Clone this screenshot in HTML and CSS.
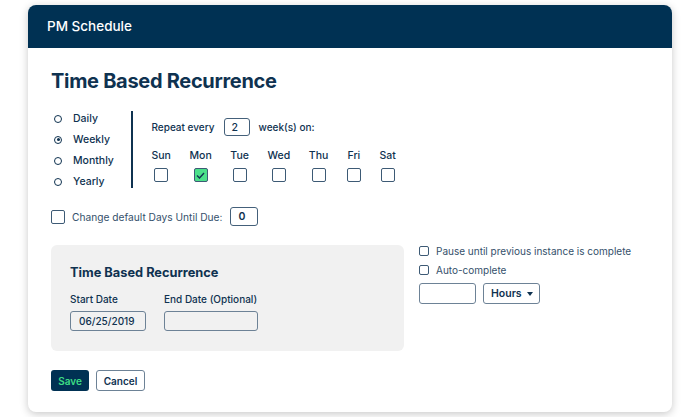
FILE: index.html
```html
<!DOCTYPE html>
<html lang="en">
<head>
    <meta charset="UTF-8">
    <title>PM Schedule</title>
    <link rel="stylesheet" href="styles.css">
</head>
<body>
    <div class="card">
        <div class="card-header">PM Schedule</div>

        <div class="card-body">
            <h1 class="title">Time Based Recurrence</h1>

            <div class="recurrence">
                <ul class="freq-list">
                    <li><span class="radio"></span>Daily</li>
                    <li><span class="radio checked"></span>Weekly</li>
                    <li><span class="radio"></span>Monthly</li>
                    <li><span class="radio"></span>Yearly</li>
                </ul>
                <div class="divider"></div>

                <div class="weekly">
                    <div class="repeat-row">
                        <span>Repeat every</span>
                        <span class="num-box">2</span>
                        <span>week(s) on:</span>
                    </div>
                    <div class="days">
                        <div class="day"><span>Sun</span><span class="check"></span></div>
                        <div class="day"><span>Mon</span><span class="check on">
                            <svg width="9" height="7" viewBox="0 0 9 7"><path d="M1 3.5 L3.5 6 L8 1" fill="none" stroke="#0f3250" stroke-width="1.4"/></svg>
                        </span></div>
                        <div class="day"><span>Tue</span><span class="check"></span></div>
                        <div class="day"><span>Wed</span><span class="check"></span></div>
                        <div class="day"><span>Thu</span><span class="check"></span></div>
                        <div class="day"><span>Fri</span><span class="check"></span></div>
                        <div class="day"><span>Sat</span><span class="check"></span></div>
                    </div>
                </div>
            </div>

            <div class="due-row">
                <span class="check"></span>
                <span>Change default Days Until Due:</span>
                <span class="num-box due">0</span>
            </div>

            <div class="bottom">
                <div class="range-box">
                    <h2>Time Based Recurrence</h2>
                    <div class="dates">
                        <div class="field">
                            <label>Start Date</label>
                            <span class="date-input start">06/25/2019</span>
                        </div>
                        <div class="field">
                            <label>End Date (Optional)</label>
                            <span class="date-input end"></span>
                        </div>
                    </div>
                </div>

                <div class="options">
                    <div class="opt"><span class="small-check"></span>Pause until previous instance is complete</div>
                    <div class="opt"><span class="small-check"></span>Auto-complete</div>
                    <div class="auto-row">
                        <span class="hours-input"></span>
                        <span class="select">Hours <span class="caret"></span></span>
                    </div>
                </div>
            </div>

            <div class="actions">
                <button class="btn-save">Save</button>
                <button class="btn-cancel">Cancel</button>
            </div>
        </div>
    </div>
</body>
</html>
```

FILE: styles.css
```css
body {
    margin: 0;
    padding: 5px 28px;
    background: #fff;
    font-family: 'Inter', 'Noto Sans', sans-serif;
    color: #0f3250;
}

.card {
    width: 644px;
    height: 407px;
    border-radius: 8px;
    background: #fff;
    box-shadow: 0 2px 8px rgba(0,0,0,0.22);
    overflow: hidden;
}

.card-header {
    height: 43px;
    line-height: 43px;
    padding-left: 19px;
    background: #003153;
    color: #fff;
    font-size: 13.5px;
    font-weight: 500;
}

.card-body {
    padding: 0 23px;
}

.title {
    margin: 20px 0 0;
    font-size: 20px;
    line-height: 26px;
    font-weight: 700;
    letter-spacing: -0.3px;
}

/* recurrence */
.recurrence {
    display: flex;
    align-items: flex-start;
    margin-top: 17px;
}

.freq-list {
    list-style: none;
    margin: -3px 0 0;
    padding: 0 0 0 3px;
    width: 77px;
}

    .freq-list li {
        display: flex;
        align-items: center;
        height: 21px;
        font-size: 10.5px;
        font-weight: 500;
    }

.divider {
    width: 1.5px;
    height: 77px;
    background: #0f3250;
}

.radio {
    width: 6px;
    height: 6px;
    border: 1.5px solid #0f3250;
    border-radius: 50%;
    margin-right: 11px;
    position: relative;
}

    .radio.checked::after {
        content: '';
        position: absolute;
        left: 1.5px;
        top: 1.5px;
        width: 3px;
        height: 3px;
        border-radius: 50%;
        background: #0f3250;
    }

.weekly {
    padding-left: 19px;
}

.repeat-row {
    display: flex;
    align-items: center;
    gap: 9px;
    margin-top: 7px;
    font-size: 10px;
    font-weight: 500;
}

.num-box {
    display: inline-flex;
    align-items: center;
    width: 26px;
    height: 18px;
    padding-left: 7px;
    box-sizing: border-box;
    border: 1px solid #44607a;
    border-radius: 3px;
    font-size: 10.5px;
}

.days {
    display: flex;
    gap: 18.6px;
    margin-top: 13px;
}

.day {
    display: flex;
    flex-direction: column;
    align-items: center;
    gap: 6px;
    font-size: 10.5px;
    line-height: 13px;
    font-weight: 500;
}

.check {
    display: inline-flex;
    align-items: center;
    justify-content: center;
    width: 14px;
    height: 14px;
    box-sizing: border-box;
    border: 1.2px solid #3d5a75;
    border-radius: 2px;
    background: #fff;
}

    .check.on {
        background: #4be08a;
    }

/* days until due */
.due-row {
    display: flex;
    align-items: center;
    margin-top: 15px;
    font-size: 10.2px;
    color: #34506b;
}

    .due-row .check {
        margin-right: 7px;
    }

    .due-row .num-box {
        margin-left: 8px;
        width: 28px;
        height: 19px;
        color: #0f3250;
        font-weight: 600;
    }

/* bottom */
.bottom {
    display: flex;
    margin-top: 19px;
}

.range-box {
    width: 353px;
    height: 106px;
    box-sizing: border-box;
    padding: 20px 19px;
    background: #f1f1f1;
    border-radius: 6px;
}

    .range-box h2 {
        margin: 0;
        font-size: 12.8px;
        font-weight: 700;
        line-height: 15px;
    }

.dates {
    display: flex;
    gap: 18px;
    margin-top: 13px;
}

.field label {
    display: block;
    font-size: 10px;
    font-weight: 500;
    line-height: 12px;
}

.date-input {
    display: flex;
    align-items: center;
    height: 18px;
    margin-top: 6px;
    padding-left: 8px;
    border: 1px solid #6d8296;
    border-radius: 3px;
    font-size: 10px;
    font-weight: 500;
}

    .date-input.start {
        width: 66px;
    }

    .date-input.end {
        width: 84px;
    }

.options {
    padding-left: 15px;
    font-size: 10px;
    color: #34506b;
}

.opt {
    display: flex;
    align-items: center;
    height: 19px;
}

    .opt:first-child {
        margin-top: -3.5px;
    }

.small-check {
    width: 10px;
    height: 10px;
    box-sizing: border-box;
    border: 1px solid #3d5a75;
    border-radius: 2px;
    margin-right: 7px;
}

.auto-row {
    display: flex;
    gap: 7px;
    margin-top: 3.5px;
}

.hours-input {
    width: 57px;
    height: 21px;
    box-sizing: border-box;
    border: 1px solid #6d8296;
    border-radius: 3px;
}

.select {
    display: flex;
    align-items: center;
    gap: 5px;
    width: 57px;
    height: 21px;
    box-sizing: border-box;
    padding-left: 7px;
    border: 1px solid #6d8296;
    border-radius: 3px;
    font-size: 10.5px;
    font-weight: 600;
    color: #0f3250;
}

.caret {
    width: 0;
    height: 0;
    border-left: 3.5px solid transparent;
    border-right: 3.5px solid transparent;
    border-top: 4px solid #0f3250;
}

/* buttons */
.actions {
    display: flex;
    gap: 7px;
    margin-top: 19px;
}

    .actions button {
        height: 21px;
        border-radius: 3px;
        font-family: inherit;
        font-size: 10px;
        font-weight: 600;
        cursor: pointer;
    }

.btn-save {
    width: 38px;
    background: #003153;
    color: #3ddc84;
    border: none;
}

.btn-cancel {
    width: 49px;
    background: #fff;
    color: #0f3250;
    border: 1px solid #6d8296;
}
```
